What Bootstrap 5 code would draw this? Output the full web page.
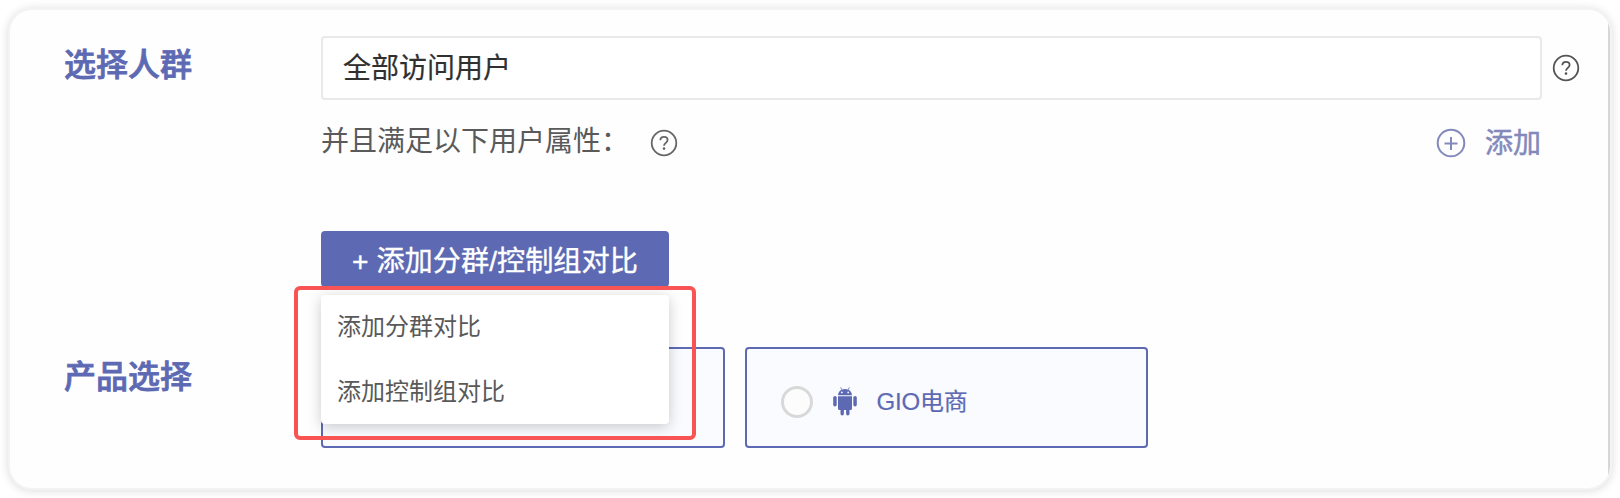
<!DOCTYPE html>
<html lang="zh-CN">
<head>
<meta charset="utf-8">
<meta name="viewport" content="width=device-width, initial-scale=1">
<title>选择人群</title>
<link href="https://cdn.jsdelivr.net/npm/bootstrap@5.3.0/dist/css/bootstrap.min.css" rel="stylesheet">
<style>
:root { --brand: #5d6ab3; --brand-soft: #8389bb; }
body { font-family: "Liberation Sans", "Noto Sans CJK SC", sans-serif; background: #fff; height: 498px; overflow: hidden; padding: 8px; }
.panel { height: 482px; width: 1604px; border: 2px solid #f3f3f3; border-radius: 24px; background: #fefefe; box-shadow: 0 1px 10px rgba(0,0,0,.14); padding: 26px 26px 0 54px; overflow: hidden; }
.scroll-edge { top: 12px; bottom: 12px; right: 0; width: 2px; background: #d6d6d6; }
.field-title { width: 257px; flex: none; font-size: 32px; line-height: 40px; font-weight: 500; color: var(--brand); -webkit-text-stroke: .8px var(--brand); }
.audience { height: 311px; }
.audience .field-title { padding-top: 9px; }
.product-title { padding-top: 10px; }
.crowd-input { width: 1221px; height: 64px; border: 2px solid #e9e9e9; border-radius: 4px; background: #fff; color: #303030; font-size: 28px; padding: 2px 20px 0; -webkit-text-stroke: .2px; }
.sub-row { width: 1221px; height: 40px; margin-top: 22px; font-size: 28px; line-height: 40px; color: #5a5a5a; }
.add-link { color: var(--brand-soft); gap: 19px; padding: 2px 1px 0 0; }
.add-link span { -webkit-text-stroke: .5px; padding-top: 2px; }
.compare { width: 348px; margin-top: 69px; }
.btn-compare { --bs-btn-color: #fff; --bs-btn-bg: var(--brand); --bs-btn-hover-bg: #525fa8; --bs-btn-hover-color: #fff; width: 348px; height: 56px; border: 0; border-radius: 4px; font-size: 28.2px; line-height: 56px; padding: 2px 0 0; white-space: pre; -webkit-text-stroke: .35px; }
.compare .compare-menu { top: 64px; left: 0; width: 348px; height: 129px; border: 0; border-radius: 4px; padding: 0; margin: 0; background: #fff; box-shadow: 0 3px 14px rgba(0,0,0,.2); }
.compare-menu .dropdown-item { height: 64.5px; padding: 0 16px; line-height: 64px; font-size: 24px; color: #595959; }
.highlight { left: -27px; top: 55px; width: 402px; height: 154px; border: 4px solid #f95454; border-radius: 6px; z-index: 1001; pointer-events: none; }
.product { width: 403.500px; height: 101px; border: 2px solid var(--brand); border-radius: 4px; background: #fafbff; color: var(--brand); font-size: 24px; padding: 8px 0 0 34px; }
.product-name { -webkit-text-stroke: .2px; letter-spacing: -.2px; }
.radio-dot { width: 32px; height: 32px; border: 3px solid #d8d8d8; background: #fcfcfd; }
</style>
</head>
<body>
<main class="panel position-relative">
  <span class="scroll-edge position-absolute"></span>
  <section class="audience d-flex">
    <div class="field-title">选择人群</div>
    <div>
      <div class="d-flex align-items-center">
        <div class="crowd-input d-flex align-items-center">全部访问用户</div>
        <svg width="28" height="28" viewBox="0 0 28 28" fill="none" stroke="#555" stroke-width="1.8" style="margin-left:10px"><circle cx="14" cy="14" r="12.3"/><path d="M10.3 11.3C10.4 9 11.9 7.8 14 7.8s3.6 1.3 3.6 3.2c0 2.8-3.6 3-3.6 5.8"/><circle cx="14" cy="19.6" r="1.3" fill="#555" stroke="none"/></svg>
      </div>
      <div class="sub-row d-flex align-items-center justify-content-between">
        <div class="d-flex align-items-center"><span>并且满足以下用户属性：</span>
          <svg width="28" height="28" viewBox="0 0 28 28" fill="none" stroke="#666" stroke-width="1.8" style="margin:1px 0 0 21px"><circle cx="14" cy="14" r="12.3"/><path d="M10.3 11.3C10.4 9 11.9 7.8 14 7.8s3.6 1.3 3.6 3.2c0 2.8-3.6 3-3.6 5.8"/><circle cx="14" cy="19.6" r="1.3" fill="#666" stroke="none"/></svg>
        </div>
        <div class="add-link d-flex align-items-center">
          <svg width="30" height="30" viewBox="0 0 30 30" fill="none" stroke="currentColor" stroke-width="2"><circle cx="15" cy="15" r="13.3"/><path d="M15 9v13M8.5 15.5h13"/></svg>
          <span>添加</span>
        </div>
      </div>
      <div class="compare dropdown position-relative">
        <button class="btn btn-compare" type="button">+ 添加分群/控制组对比</button>
        <ul class="dropdown-menu compare-menu show">
          <li><a class="dropdown-item" href="#">添加分群对比</a></li>
          <li><a class="dropdown-item" href="#">添加控制组对比</a></li>
        </ul>
        <span class="highlight position-absolute"></span>
      </div>
    </div>
  </section>
  <section class="d-flex">
    <div class="field-title product-title">产品选择</div>
    <div class="d-flex" style="gap:20px">
      <div class="product"></div>
      <div class="product d-flex align-items-center">
        <span class="radio-dot rounded-circle"></span>
        <svg width="24" height="30" viewBox="0 0 24 30" fill="currentColor" style="margin:0 20px"><path d="M5 8.2C5.2 5.4 6.7 3.6 8.6 2.7L7.2.5l.6-.3L9.3 2.4a8 8 0 0 1 5.4 0L16.2.2l.6.3-1.4 2.2C17.3 3.6 18.8 5.4 19 8.2z"/><circle cx="8.8" cy="5.4" r=".9" fill="#fafbff"/><circle cx="15.2" cy="5.4" r=".9" fill="#fafbff"/><path d="M5 9.2h14v12.3a1.500 1.500 0 0 1-1.500 1.500H16.500v3.800a1.700 1.700 0 0 1-3.400 0V23h-2.200v3.800a1.700 1.700 0 0 1-3.400 0V23H6.500A1.500 1.500 0 0 1 5 21.500z"/><rect x=".2" y="9" width="3.500" height="10.500" rx="1.750"/><rect x="20.300" y="9" width="3.500" height="10.500" rx="1.750"/></svg>
        <span class="product-name">GIO电商</span>
      </div>
    </div>
  </section>
</main>
<script src="https://cdn.jsdelivr.net/npm/bootstrap@5.3.0/dist/js/bootstrap.bundle.min.js"></script>
</body>
</html>
